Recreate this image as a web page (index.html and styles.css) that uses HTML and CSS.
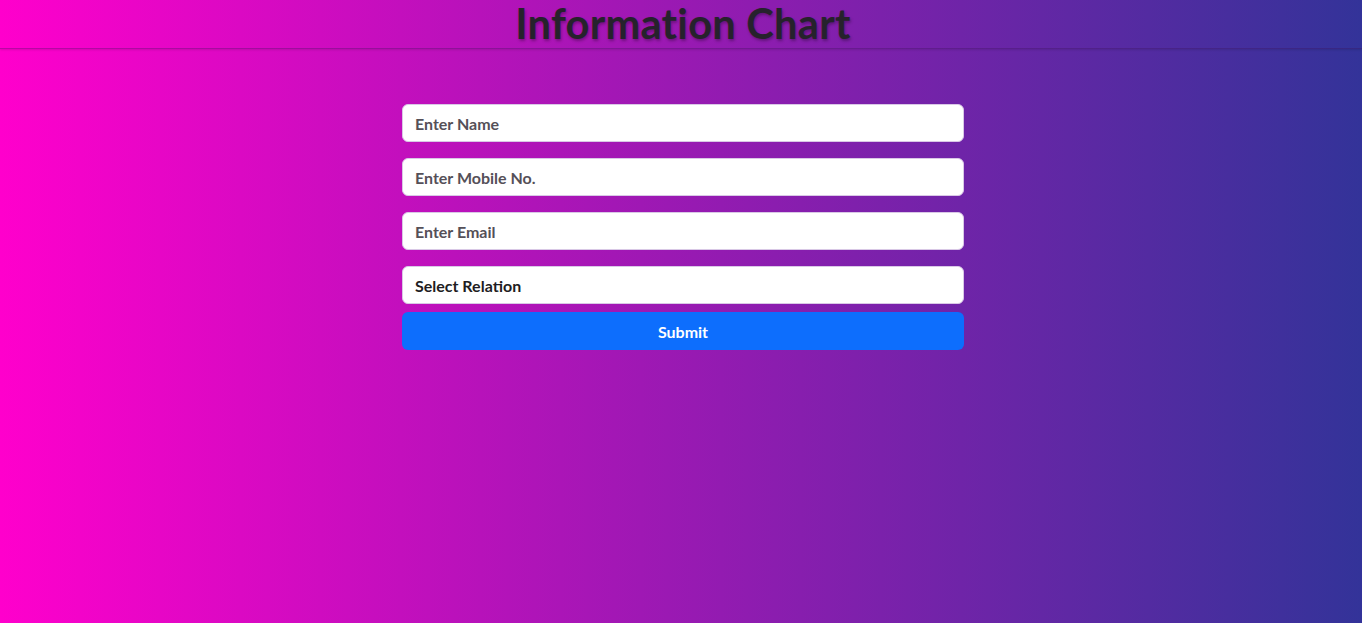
FILE: index.html
```html
<!DOCTYPE html>
<html>
<head>
<meta charset="utf-8">
<link rel="stylesheet" href="styles.css">
</head>
<body>
<header class="header">
  <h1 class="title">Information Chart</h1>
</header>
<main class="main">
  <form class="form">
    <input class="field" type="text" placeholder="Enter Name">
    <input class="field" type="text" placeholder="Enter Mobile No.">
    <input class="field" type="text" placeholder="Enter Email">
    <select class="field select">
      <option>Select Relation</option>
    </select>
    <button class="submit" type="button">Submit</button>
  </form>
</main>
</body>
</html>
```
FILE: styles.css
```css
html, body {
  margin: 0;
  height: 100%;
}
body {
  background: linear-gradient(to right, #ff00cc, #333399);
  font-family: "Lato", "Open Sans", sans-serif;
  padding-left: 4px;
  box-sizing: border-box;
}
.header {
  height: 48px;
  border-bottom: 1px solid rgba(60, 20, 90, 0.35);
  box-shadow: 0 1px 2px rgba(0, 0, 0, 0.12);
  display: flex;
  justify-content: center;
  align-items: flex-start;
  margin-left: -4px;
  padding-left: 4px;
}
.title {
  margin: 0;
  font-size: 41.5px;
  line-height: 46px;
  font-weight: 700;
  color: #26222c;
  text-shadow: 1px 2px 3px rgba(0, 0, 0, 0.3);
  letter-spacing: 0.3px;
}
.main {
  display: flex;
  justify-content: center;
  padding-top: 55px;
}
.form {
  width: 562px;
  display: flex;
  flex-direction: column;
}
.field {
  box-sizing: border-box;
  height: 38px;
  width: 100%;
  padding: 6px 12px;
  border: 1px solid #d9c8e6;
  border-radius: 6px;
  background: #fff;
  font-family: inherit;
  font-size: 16px;
  font-weight: 700;
  color: #212529;
  margin-bottom: 16px;
  outline: none;
}
.field::placeholder {
  color: #555058;
  opacity: 1;
}
.select {
  appearance: none;
  -webkit-appearance: none;
  margin-bottom: 8px;
  color: #211c22;
}
.submit {
  height: 38px;
  border: none;
  border-radius: 6px;
  background: #0d6efd;
  color: #fff;
  font-family: inherit;
  font-size: 16px;
  font-weight: 700;
}
```
